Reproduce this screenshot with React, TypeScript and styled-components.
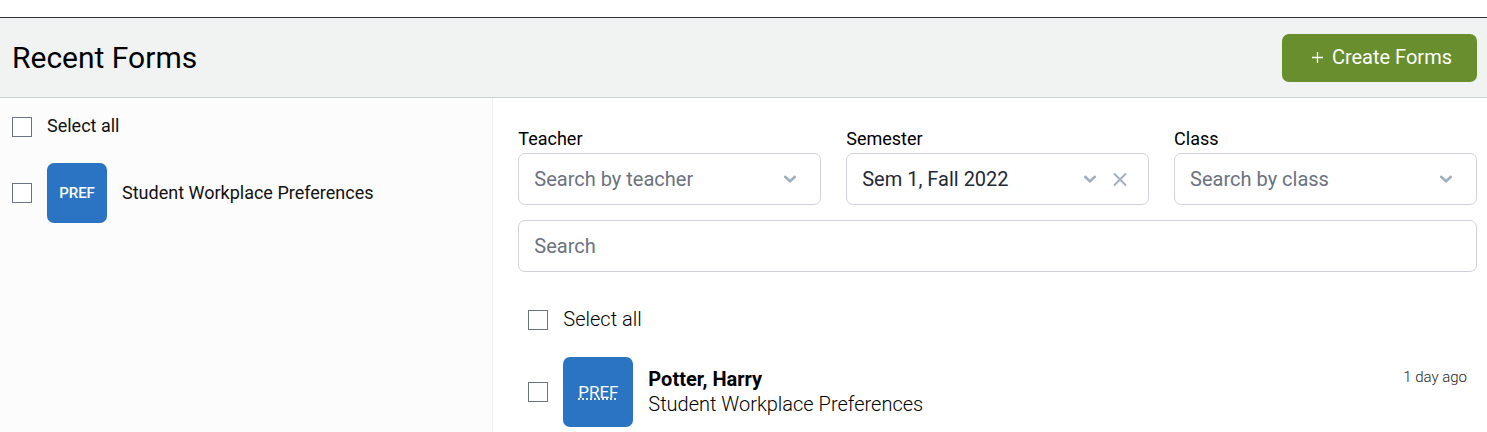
import React, { useState } from "react";
import styled, { createGlobalStyle } from "styled-components";

const GlobalStyle = createGlobalStyle`
  *, *::before, *::after { box-sizing: border-box; }
  html, body, #root { min-height: 100vh; }
  body {
    margin: 0;
    background: #fff;
    color: #000;
    font-family: Roboto, "Liberation Sans", sans-serif;
    font-size: 18px;
    line-height: 24px;
  }
  #root { display: flex; flex-direction: column; }
  button, input, select { font: inherit; }
`;

const Header = styled.header`
  display: flex;
  align-items: center;
  justify-content: space-between;
  margin-top: 17px;
  padding: 16px 10px 15px 12px;
  border-top: 1px solid #2e3338;
  border-bottom: 1px solid #cfd2d4;
  background: #f0f3f2;
`;

const Title = styled.h1`
  margin: 0;
  font-size: 30px;
  line-height: 36px;
  font-weight: 400;
`;

const CreateButton = styled.button`
  display: flex;
  align-items: center;
  gap: 9px;
  padding: 11px 25px 13px 29px;
  border: 0;
  border-radius: 7px;
  background: #688e2e;
  color: #fff;
  font-size: 20px;
  line-height: 24px;
  cursor: pointer;
`;

const Columns = styled.div`
  flex: 1;
  display: grid;
  grid-template-columns: 1fr 2fr;
  padding-right: 10px;
`;

const Sidebar = styled.aside`
  padding: 16px 12px;
  background: #fcfcfc;
  color: #111;
`;

const Main = styled.main`
  padding: 29px 0 5px 25px;
  border-left: 1px solid #efefef;
`;

const FormLabel = styled.label`
  display: flex;
  align-items: center;
  gap: 15px;
  cursor: pointer;
`;

const FormList = styled.ul<{ $top: number }>`
  margin: ${(p) => p.$top}px 0 0;
  padding: 0;
  list-style: none;
`;

const Checkbox = styled.input`
  appearance: none;
  flex: none;
  width: 20px;
  height: 20px;
  margin: 0;
  border: 1px solid #6b7280;
  background: #fff;
  &:checked { background: #2b74c4; }
`;

const SelectAllLabel = styled(FormLabel)`
  ${Checkbox} { margin-top: 2px; }
  height: 24px;
`;

const Badge = styled.span<{ $size: number }>`
  display: flex;
  flex: none;
  align-items: center;
  justify-content: center;
  width: ${(p) => p.$size}px;
  height: ${(p) => p.$size}px;
  border-radius: 7px;
  background: #2b74c4;
  color: #fff;
  font-size: 15px;
  font-weight: 500;
  abbr {
    font-size: 17px;
    font-weight: 400;
    text-decoration: underline dotted;
  }
`;

const Filters = styled.div`
  display: grid;
  grid-template-columns: repeat(3, 1fr);
  gap: 25px;
`;

const Field = styled.div`
  display: flex;
  flex-direction: column;
  gap: 2px;
`;

const SelectWrap = styled.div`
  position: relative;
`;

const controlStyle = `
  appearance: none;
  display: block;
  width: 100%;
  height: 52px;
  padding: 0 15px;
  border: 1px solid #d0d2da;
  border-radius: 7px;
  background: #fff;
  font-size: 20px;
  line-height: 24px;
`;

const Select = styled.select<{ $filled: boolean }>`
  ${controlStyle}
  color: ${(p) => (p.$filled ? "#1f2937" : "#6b7280")};
`;

const SearchInput = styled.input`
  ${controlStyle}
  margin-top: 15px;
  &::placeholder { color: #6b7280; opacity: 1; }
`;

const SelectIcons = styled.div`
  position: absolute;
  top: 0;
  right: 20px;
  bottom: 0;
  display: flex;
  align-items: center;
  gap: 10px;
  color: #a0aec0;
  pointer-events: none;
  svg { display: block; }
`;

const ClearButton = styled.button`
  padding: 0;
  border: 0;
  background: none;
  color: inherit;
  cursor: pointer;
  pointer-events: auto;
`;

const Results = styled.section`
  padding: 35px 10px 0;
  font-size: 20px;
  font-weight: 300;
`;

const ResultItem = styled.li`
  display: flex;
  align-items: flex-start;
  justify-content: space-between;
`;

const ResultText = styled.span`
  display: flex;
  flex-direction: column;
  line-height: 25px;
`;

const StudentName = styled.strong`
  font-weight: 700;
`;

const Age = styled.time`
  padding-top: 10px;
  color: #222;
  font-size: 15px;
  line-height: 20px;
`;

const Plus = () => (
  <svg width="12" height="12" viewBox="0 0 12 12" aria-hidden="true">
    <path d="M1 6.5h11M6.5 1v11" stroke="currentColor" strokeWidth="1.3" />
  </svg>
);

const Chevron = () => (
  <svg width="22" height="20" viewBox="0 0 22 20" fill="none" aria-hidden="true">
    <path d="M6.2 7.8l4.8 4.6 4.8-4.6" stroke="currentColor" strokeWidth="2.6" strokeLinecap="round" strokeLinejoin="round" />
  </svg>
);

const Cross = () => (
  <svg width="18" height="20" viewBox="0 0 18 20" fill="none" aria-hidden="true">
    <path d="M3.5 5l11 11M14.5 5l-11 11" stroke="currentColor" strokeWidth="1.9" strokeLinecap="round" />
  </svg>
);

interface FilterProps {
  id: string;
  label: string;
  placeholder: string;
  options?: string[];
  initial?: string;
}

function Filter({ id, label, placeholder, options = [], initial = "" }: FilterProps) {
  const [value, setValue] = useState(initial);
  return (
    <Field>
      <label htmlFor={id}>{label}</label>
      <SelectWrap>
        <Select id={id} value={value} $filled={value !== ""} onChange={(e) => setValue(e.target.value)}>
          <option value="">{placeholder}</option>
          {options.map((o) => (
            <option key={o}>{o}</option>
          ))}
        </Select>
        <SelectIcons>
          <Chevron />
          {value !== "" && (
            <ClearButton type="button" aria-label={`Clear ${label}`} onClick={() => setValue("")}>
              <Cross />
            </ClearButton>
          )}
        </SelectIcons>
      </SelectWrap>
    </Field>
  );
}

export default function App() {
  return (
    <>
      <GlobalStyle />
      <Header>
        <Title>Recent Forms</Title>
        <CreateButton type="button">
          <Plus />
          Create Forms
        </CreateButton>
      </Header>
      <Columns>
        <Sidebar>
          <SelectAllLabel>
            <Checkbox type="checkbox" />
            Select all
          </SelectAllLabel>
          <FormList $top={25}>
            <li>
              <FormLabel>
                <Checkbox type="checkbox" />
                <Badge $size={60}>PREF</Badge>
                Student Workplace Preferences
              </FormLabel>
            </li>
          </FormList>
        </Sidebar>
        <Main>
          <Filters>
            <Filter id="teacher" label="Teacher" placeholder="Search by teacher" />
            <Filter
              id="semester"
              label="Semester"
              placeholder="Search by semester"
              options={["Sem 1, Fall 2022"]}
              initial="Sem 1, Fall 2022"
            />
            <Filter id="class" label="Class" placeholder="Search by class" />
          </Filters>
          <SearchInput type="search" placeholder="Search" aria-label="Search" />
          <Results>
            <SelectAllLabel>
              <Checkbox type="checkbox" />
              Select all
            </SelectAllLabel>
            <FormList $top={26}>
              <ResultItem>
                <FormLabel>
                  <Checkbox type="checkbox" />
                  <Badge $size={70}>
                    <abbr title="Preferences">PREF</abbr>
                  </Badge>
                  <ResultText>
                    <StudentName>Potter, Harry</StudentName>
                    <span>Student Workplace Preferences</span>
                  </ResultText>
                </FormLabel>
                <Age>1 day ago</Age>
              </ResultItem>
            </FormList>
          </Results>
        </Main>
      </Columns>
    </>
  );
}
